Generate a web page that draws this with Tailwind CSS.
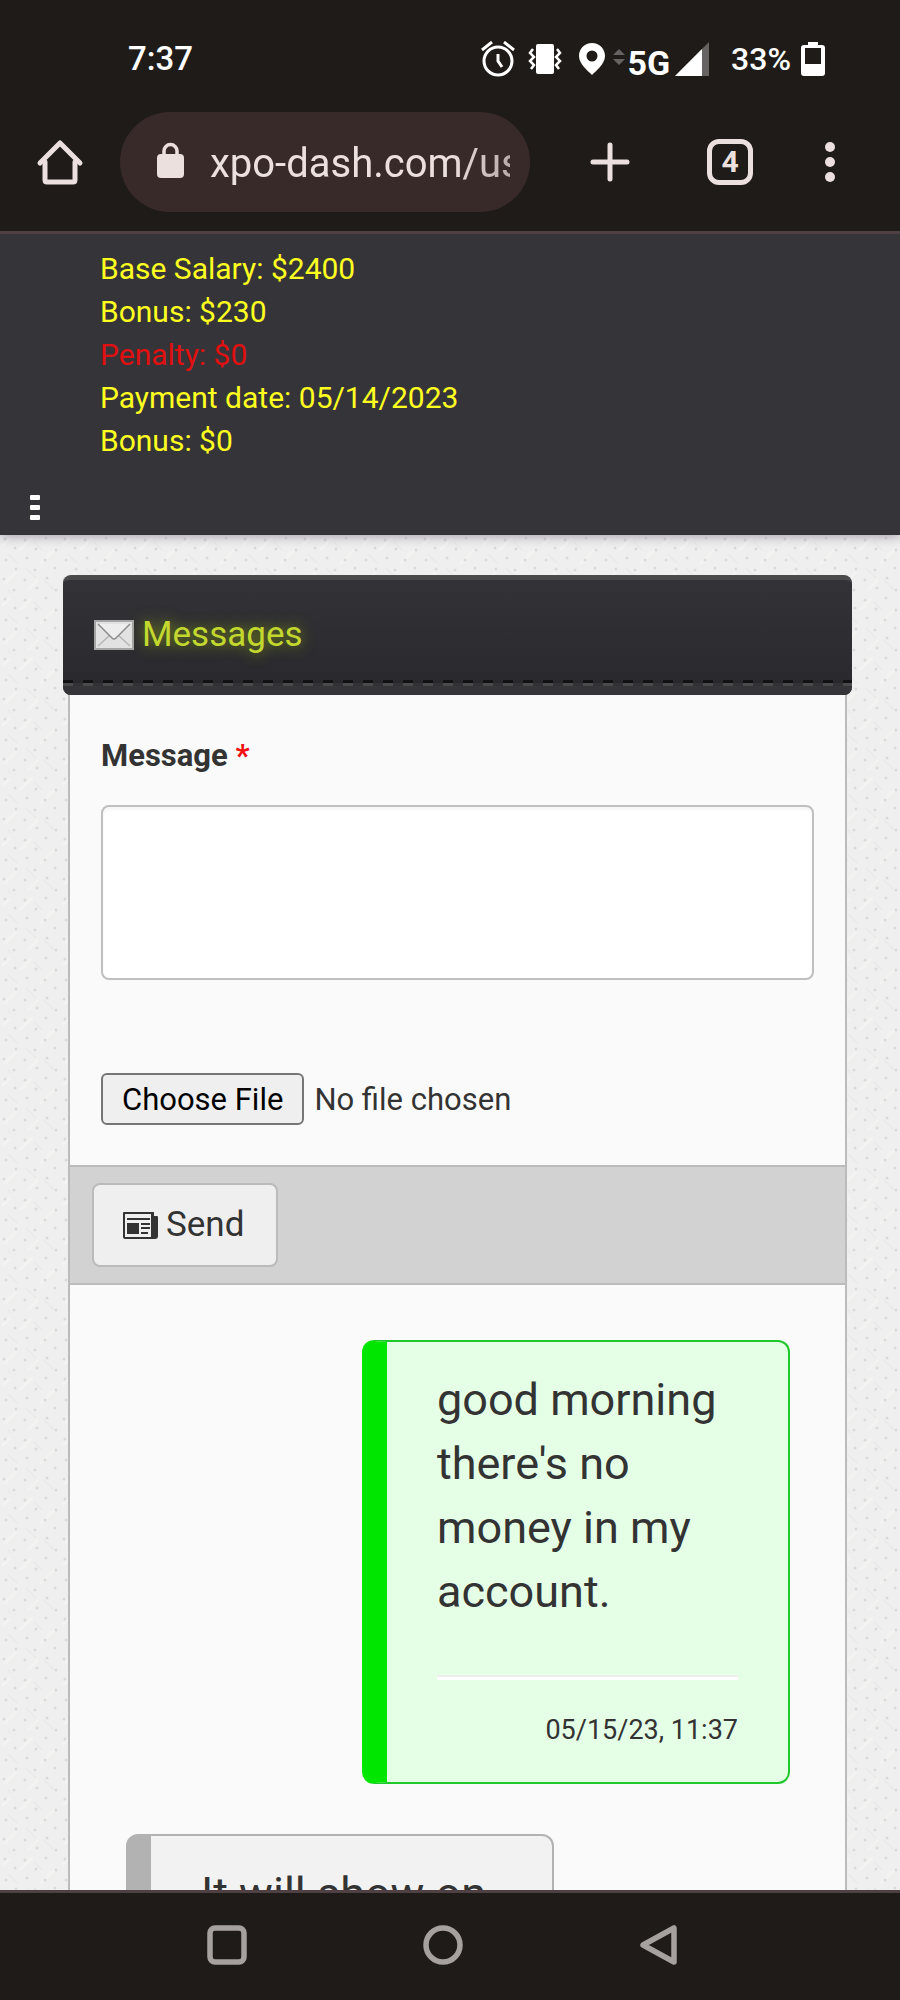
<!DOCTYPE html>
<html lang="en">
<head>
  <meta charset="UTF-8" />
  <meta name="viewport" content="width=device-width, initial-scale=1.0"/>
  <title>Messages</title>
  <script src="https://cdn.jsdelivr.net/npm/@tailwindcss/browser@4"></script>
</head>
<body class="h-screen flex flex-col overflow-hidden bg-[#1f1b18] font-[Roboto,sans-serif] text-[#333333]">

  <!-- Phone status bar -->
  <div class="h-28 shrink-0 flex items-center pt-[6px] pl-32 pr-[75px] text-white">
    <span class="flex-1 text-[33px] font-medium">7:37</span>
    <svg class="w-[34px] h-9" viewBox="0 0 34 36" fill="none" stroke="currentColor" stroke-width="3">
      <circle cx="17" cy="20" r="14"/>
      <path d="M17 13v7l4 6"/>
      <path d="M1 9l10-8M33 9L23 1" stroke-width="3"/>
    </svg>
    <svg class="w-[34px] h-8 ml-[13px]" viewBox="0 0 34 32" fill="none" stroke="currentColor" stroke-width="2.5">
      <rect x="8" y="1" width="18" height="30" rx="2" fill="currentColor" stroke="none"/>
      <path d="M5 6L2 10l4 4-4 4 4 4-3 4M29 6l3 4-4 4 4 4-4 4 3 4"/>
    </svg>
    <svg class="w-[26px] h-8 ml-[17px]" viewBox="0 0 26 32" fill="currentColor">
      <path fill-rule="evenodd" d="M13 0C5.600 0 0 5.700 0 13c0 8 9 15 13 19 4-4 13-11 13-19C26 5.700 20.400 0 13 0zm0 7.500a5.500 5.500 0 1 1 0 11 5.500 5.500 0 0 1 0-11z"/>
    </svg>
    <svg class="w-3 h-4 ml-2 mb-1" viewBox="0 0 12 16" fill="#666362">
      <path d="M6 0l6 6H0zM6 16l6-6H0z"/>
    </svg>
    <span class="ml-[2px] mt-2 text-[34px] leading-none font-bold">5G</span>
    <svg class="w-[34px] h-[34px] ml-[5px]" viewBox="0 0 34 34">
      <path d="M34 0v34H0z" fill="#666362"/>
      <path d="M27 7v27H0z" fill="currentColor"/>
    </svg>
    <span class="ml-[22px] text-[32px] font-medium">33%</span>
    <svg class="w-6 h-[34px] ml-[10px]" viewBox="0 0 24 34" fill="currentColor">
      <path fill-rule="evenodd" d="M7 0h10v3h4a3 3 0 0 1 3 3v25a3 3 0 0 1-3 3H3a3 3 0 0 1-3-3V6a3 3 0 0 1 3-3h4zM4 6v16h16V6z"/>
    </svg>
  </div>

  <!-- Browser toolbar -->
  <div class="h-[122px] shrink-0 flex items-start pl-9 pr-[65px] text-[#ece0df] border-b-3 border-[#4f4044]">
    <button type="button" aria-label="Home" class="h-[100px] shrink-0">
      <svg class="w-12 h-12" viewBox="0 0 48 48" fill="none" stroke="currentColor" stroke-width="5" stroke-linejoin="round" stroke-linecap="round">
        <path d="M9 24v18q0 2 2 2h26q2 0 2-2V24"/>
        <path d="M4 25L24 5l20 20"/>
      </svg>
    </button>
    <div class="flex-1 min-w-0 h-[100px] ml-9 pl-9 pr-5 flex items-center rounded-full bg-[#392a2a]">
      <svg class="w-7 h-9 shrink-0 mb-1" viewBox="0 0 28 36" fill="none">
        <rect x="1" y="12" width="27" height="24" rx="4" fill="currentColor"/>
        <path d="M8 13V9a6.500 6.500 0 0 1 13 0v4" stroke="currentColor" stroke-width="3.500"/>
      </svg>
      <input type="text" aria-label="Address" value="xpo-dash.com/us" class="flex-1 min-w-0 ml-[26px] pt-[3px] text-[40px] leading-[52px] outline-none mask-r-from-80% mask-r-to-150%"/>
    </div>
    <button type="button" aria-label="New tab" class="h-[100px] shrink-0 ml-[60px]">
      <svg class="w-10 h-10" viewBox="0 0 40 40" stroke="currentColor" stroke-width="5" stroke-linecap="round">
        <path d="M20 3v34M3 20h34"/>
      </svg>
    </button>
    <div class="h-[100px] shrink-0 ml-[77px] flex items-center">
      <button type="button" aria-label="Open tabs" class="size-[46px] rounded-xl border-5 border-current text-[30px] leading-none font-bold">4</button>
    </div>
    <button type="button" aria-label="Menu" class="h-[100px] shrink-0 ml-[72px]">
      <svg class="w-[10px] h-10" viewBox="0 0 10 40" fill="currentColor">
        <circle cx="5" cy="5" r="5"/><circle cx="5" cy="20" r="5"/><circle cx="5" cy="35" r="5"/>
      </svg>
    </button>
  </div>

  <!-- Web page -->
  <div class="relative flex-1 min-h-0 overflow-hidden bg-[#efefef]">
    <svg class="absolute inset-0 w-full h-full" aria-hidden="true">
      <defs>
        <pattern id="cloth" width="60" height="60" patternUnits="userSpaceOnUse">
          <path d="M2 12l8-8M20 16l12-12M40 30l14-14M4 50l12-12M28 56l10-10" stroke="#f3f3f2" stroke-width="3"/>
          <path d="M8 20l9 9M34 8l8 8M26 34l10 10M44 46l10 10M8 56l3 3" stroke="#eaeaea" stroke-width="2"/>
          <g fill="#dadada">
            <circle cx="5" cy="5" r="1.500"/><circle cx="25" cy="6" r="1.500"/><circle cx="46" cy="4" r="1.500"/>
            <circle cx="15" cy="14" r="1.500"/><circle cx="36" cy="15" r="1.500"/><circle cx="56" cy="16" r="1.500"/>
            <circle cx="6" cy="26" r="1.500"/><circle cx="27" cy="24" r="1.500"/><circle cx="45" cy="26" r="1.500"/>
            <circle cx="16" cy="35" r="1.500"/><circle cx="35" cy="36" r="1.500"/><circle cx="55" cy="34" r="1.500"/>
            <circle cx="4" cy="45" r="1.500"/><circle cx="25" cy="46" r="1.500"/><circle cx="47" cy="44" r="1.500"/>
            <circle cx="14" cy="56" r="1.500"/><circle cx="37" cy="54" r="1.500"/><circle cx="56" cy="56" r="1.500"/>
          </g>
        </pattern>
      </defs>
      <rect width="100%" height="100%" fill="url(#cloth)"/>
    </svg>

    <header class="relative pt-[13px] pb-[14px] bg-[#353439] shadow-[0_2px_10px_rgba(40,30,60,0.35)]">
      <ul class="pl-[100px] text-[30px] leading-[43px] text-[#ffff20]">
        <li>Base Salary: $2400</li>
        <li>Bonus: $230</li>
        <li class="text-[#e01010]">Penalty: $0</li>
        <li>Payment date: 05/14/2023</li>
        <li>Bonus: $0</li>
      </ul>
      <button type="button" aria-label="Open menu" class="block mt-[33px] ml-[30px]">
        <svg class="w-[10px] h-[26px]" viewBox="0 0 10 26" fill="white">
          <rect width="10" height="5" rx="1"/><rect y="10" width="10" height="5" rx="1"/><rect y="20" width="10" height="5" rx="1"/>
        </svg>
      </button>
    </header>

    <main class="relative pt-10 pl-[63px] pr-12">
      <div class="h-[120px] flex flex-col rounded-lg overflow-hidden bg-linear-to-b from-[#333236] to-[#29282c] border-t-5 border-[#4a4a4c]">
        <h1 class="flex-1 flex items-center pl-[31px] pt-[10px] gap-2 text-[35px] text-[#c3d82f] text-shadow-[0_0_14px_rgba(180,220,0,0.6)]">
          <svg class="w-10 h-[30px]" viewBox="0 0 40 30" fill="none">
            <rect x="1" y="1" width="38" height="28" fill="#e2e2e2" stroke="#a5a5a5" stroke-width="2"/>
            <path d="M4 26l12-11M36 26L24 15" stroke="#b5b5b5" stroke-width="1.500"/>
            <path d="M4 4l14 14q2 2 4 0L36 4" fill="#ededed" stroke="#8d8d8d" stroke-width="1.500"/>
          </svg>
          Messages
        </h1>
        <div class="h-[3px] bg-[repeating-linear-gradient(90deg,#111113_0_10px,#29282c_10px_20px)]"></div>
        <div class="h-[3px] bg-[repeating-linear-gradient(90deg,#4a4a4c_0_10px,#323135_10px_20px)]"></div>
        <div class="h-[9px] bg-[#353438]"></div>
      </div>

      <div class="mx-[5px] border-x-2 border-[#bbbbbb] bg-[#fafafa]">
        <form>
          <div class="pt-[39px] px-[31px] pb-10 text-[31px]">
            <label for="message" class="block leading-[43px] font-bold">Message <span class="text-[#f01010]">*</span></label>
            <textarea id="message" class="block w-full h-[175px] mt-7 px-3 py-2 resize-none rounded-lg border-2 border-[#bfbfbf] bg-white shadow-[inset_0_3px_3px_rgba(0,0,0,0.04)] outline-none"></textarea>
            <input type="file" aria-label="Attachment" class="block w-full mt-[93px] leading-[43px] file:h-[52px] file:px-[19px] file:mr-[10px] file:rounded-md file:border-2 file:border-solid file:border-[#767676] file:bg-[#efefef] file:text-black"/>
          </div>
          <div class="h-[120px] flex items-center pl-[22px] border-y-2 border-[#bbbbbb] bg-[#d2d2d2]">
            <button type="submit" class="h-[84px] pl-[29px] pr-8 flex items-center gap-2 rounded-lg border-2 border-[#bbbbbb] bg-[#efefef] text-[35px]">
              <svg class="w-[35px] h-[27px]" viewBox="0 0 35 27" fill="currentColor">
                <path fill-rule="evenodd" d="M0 1q0-1 1-1h30v4h3q1 0 1 1v19q0 3-3 3H2q-2 0-2-2zM2 2v23h26V2z"/>
                <path d="M4 6h23v2H4zM4 11h12v11H4zM18 11h9v2h-9zM18 15h9v2h-9zM18 20h7v2h-7z"/>
              </svg>
              Send
            </button>
          </div>
        </form>

        <div class="py-[55px] pl-14 pr-[55px] flex flex-col gap-[50px]">
          <article class="w-[428px] self-end rounded-xl border-2 border-l-[25px] border-[#1fc82a] border-l-[#00e600] bg-[#e5ffe6] px-[50px] pt-[26px] pb-8">
            <p class="text-[45px] leading-[64px]">good morning there's no money in my account.</p>
            <hr class="mt-[51px] h-[5px] border-t-2 border-[#eeeeee] bg-white"/>
            <p class="mt-[30px] text-right text-[27px] leading-10">05/15/23, 11:37</p>
          </article>
          <article class="w-[428px] rounded-xl border-2 border-l-[25px] border-[#b2b2b2] bg-[#f2f2f2] px-[50px] pt-[26px] pb-8">
            <p class="text-[45px] leading-[64px]">It will show on</p>
          </article>
        </div>
      </div>
    </main>
  </div>

  <!-- Phone navigation bar -->
  <nav class="h-[110px] shrink-0 grid grid-cols-[216px_216px_216px] content-center justify-items-center pl-[119px] pb-1 border-t-3 border-[#4f4044] text-[#a6a19e]">
    <button type="button" aria-label="Recent apps">
      <svg class="size-10" viewBox="0 0 40 40" fill="none" stroke="currentColor" stroke-width="5.500"><rect x="3" y="3" width="34" height="34" rx="5"/></svg>
    </button>
    <button type="button" aria-label="Home screen">
      <svg class="size-10" viewBox="0 0 40 40" fill="none" stroke="currentColor" stroke-width="5.500"><circle cx="20" cy="20" r="17"/></svg>
    </button>
    <button type="button" aria-label="Back">
      <svg class="size-10" viewBox="0 0 40 40" fill="none" stroke="currentColor" stroke-width="5.500" stroke-linejoin="round"><path d="M35 3v34L4 20z"/></svg>
    </button>
  </nav>
</body>
</html>
